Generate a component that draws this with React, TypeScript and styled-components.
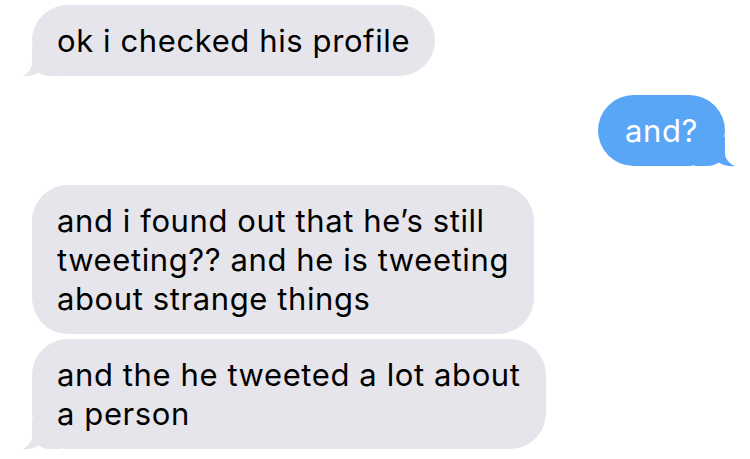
import * as React from 'react'
import styled, { createGlobalStyle } from 'styled-components'

const GlobalStyle = createGlobalStyle`
  html, body {
    margin: 0;
    padding: 0;
    background: #ffffff;
  }
  body {
    font-family: Inter, "Noto Sans", "Liberation Sans", sans-serif;
    -webkit-font-smoothing: antialiased;
  }
`

const Thread = styled.main`
  display: flex;
  flex-direction: column;
  padding: 5px 25px 0 32px;
  width: 750px;
  height: 459px;
  box-sizing: border-box;
  overflow: hidden;
`

const Row = styled.div<{ $mine?: boolean; $gap: number }>`
  display: flex;
  justify-content: ${({ $mine }) => ($mine ? 'flex-end' : 'flex-start')};
  margin-top: ${({ $gap }) => $gap}px;
`

const Bubble = styled.div<{ $mine?: boolean }>`
  position: relative;
  background: ${({ $mine }) => ($mine ? '#5aa6f6' : '#e6e5eb')};
  color: ${({ $mine }) => ($mine ? '#ffffff' : '#000000')};
  border-radius: 36px;
  padding: 16px ${({ $mine }) => ($mine ? '27px' : '25px')};
  font-size: 31px;
  line-height: 39px;
  letter-spacing: 0.6px;
  white-space: pre-line;
`

const Text = styled.span`
  position: relative;
`

const Tail = styled.svg<{ $mine?: boolean }>`
  position: absolute;
  bottom: -1px;
  width: 40px;
  height: 30px;
  ${({ $mine }) => ($mine ? 'right: -10px; transform: scaleX(-1);' : 'left: -10px;')}
  fill: ${({ $mine }) => ($mine ? '#5aa6f6' : '#e6e5eb')};
`

type Msg = { text: string; mine?: boolean; gap: number; tail?: boolean }

const messages: Msg[] = [
  { text: 'ok i checked his profile', gap: 0, tail: true },
  { text: 'and?', mine: true, gap: 19, tail: true },
  {
    text: 'and i found out that he\u2019s still\ntweeting?? and he is tweeting\nabout strange things',
    gap: 19,
  },
  { text: 'and the he tweeted a lot about\na person', gap: 5, tail: true },
]

const BubbleTail = ({ mine }: { mine?: boolean }) => (
  <Tail $mine={mine} viewBox="0 0 40 30">
    <path d="M10 0 L10 16 C10 22 6 26.5 0 29 C6 29.6 12 28.2 16.5 25.5 C19.5 27.5 23 29 28 29 L40 29 L40 0 Z" />
  </Tail>
)

const App = () => (
  <>
    <GlobalStyle />
    <Thread>
      {messages.map((m, i) => (
        <Row key={i} $mine={m.mine} $gap={m.gap}>
          <Bubble $mine={m.mine}>
            {m.tail && <BubbleTail mine={m.mine} />}
            <Text>{m.text}</Text>
          </Bubble>
        </Row>
      ))}
    </Thread>
  </>
)

export default App
